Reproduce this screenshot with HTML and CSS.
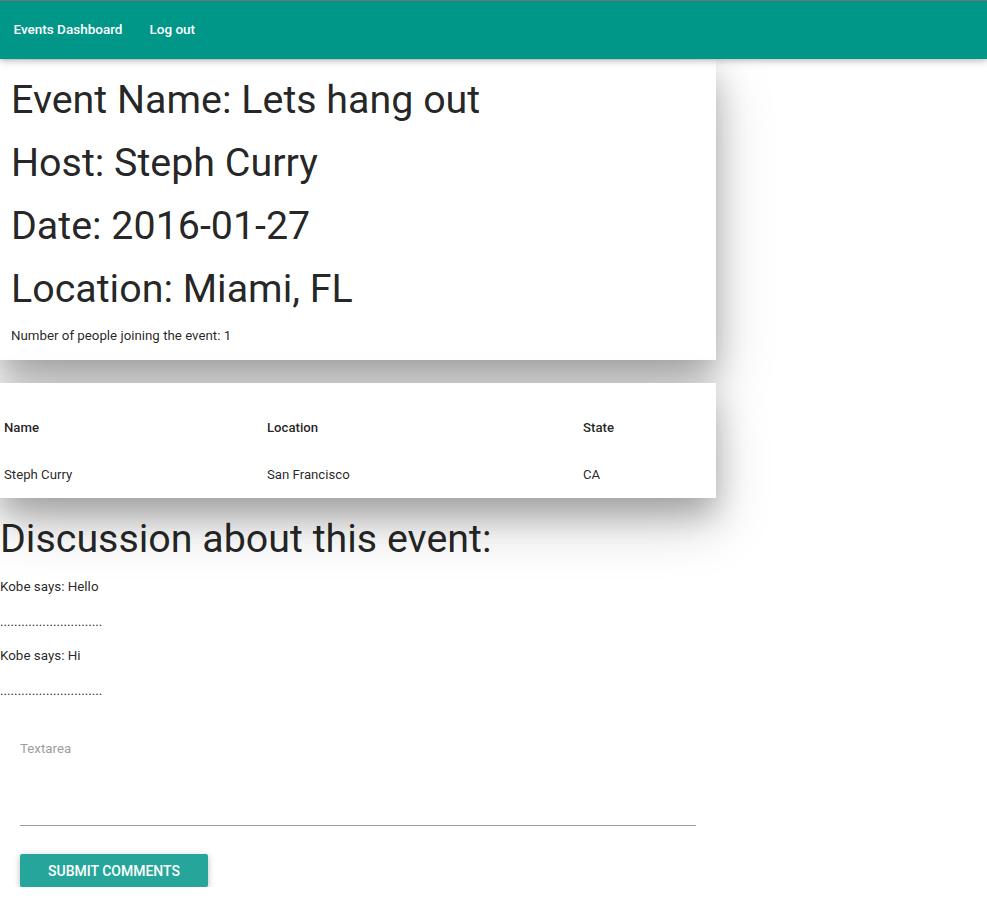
FILE: index.html
```html
<!DOCTYPE html>
<html lang="en">
<head>
<meta charset="utf-8">
<title>Event</title>
<link rel="stylesheet" href="styles.css">
</head>
<body>
<nav class="navbar">
  <a class="nav-link" href="#">Events Dashboard</a>
  <a class="nav-link" href="#">Log out</a>
</nav>
<main class="page">
  <section class="card event-card">
    <h4 class="event-line">Event Name: Lets hang out</h4>
    <h4 class="event-line">Host: Steph Curry</h4>
    <h4 class="event-line">Date: 2016-01-27</h4>
    <h4 class="event-line">Location: Miami, FL</h4>
    <p class="joining">Number of people joining the event: 1</p>
  </section>
  <section class="card table-card">
    <table class="people">
      <colgroup>
        <col class="col-name">
        <col class="col-loc">
        <col class="col-state">
      </colgroup>
      <thead>
        <tr><th>Name</th><th>Location</th><th>State</th></tr>
      </thead>
      <tbody>
        <tr><td>Steph Curry</td><td>San Francisco</td><td>CA</td></tr>
      </tbody>
    </table>
  </section>
  <h3 class="discussion-title">Discussion about this event:</h3>
  <div class="comments">
    <p class="comment">Kobe says: Hello</p>
    <p class="comment">.............................</p>
    <p class="comment">Kobe says: Hi</p>
    <p class="comment">.............................</p>
  </div>
  <form class="comment-form">
    <div class="field">
      <label class="field-label" for="ta">Textarea</label>
      <textarea id="ta" class="field-input"></textarea>
    </div>
    <button type="button" class="btn">Submit Comments</button>
  </form>
</main>
</body>
</html>
```
FILE: styles.css
```css
* { box-sizing: border-box; }
html, body { margin: 0; padding: 0; background: #fff; }
body {
  font-family: Roboto, "Noto Sans", "Liberation Sans", sans-serif;
  color: rgba(0,0,0,0.87);
}
.navbar {
  height: 59px;
  border-top: 1px solid #707070;
  background: #009688;
  display: flex;
  align-items: center;
  padding-bottom: 3px;
  box-shadow: 0 2px 5px 0 rgba(0,0,0,0.16), 0 2px 10px 0 rgba(0,0,0,0.12);
  position: relative;
  z-index: 2;
}
.nav-link {
  color: #fff;
  text-decoration: none;
  font-size: 13.5px;
  font-weight: 500;
  padding: 0 13.5px;
}
.page { display: flex; flex-direction: column; align-items: flex-start; }
.card {
  width: 716px;
  background: #fff;
  box-shadow: 0 16px 28px 0 rgba(0,0,0,0.22), 0 25px 55px 0 rgba(0,0,0,0.21);
  position: relative;
}
.event-card {
  margin-top: 1px;
  padding: 18px 11px 14px;
  display: flex;
  flex-direction: column;
  gap: 19px;
}
.event-line {
  margin: 0;
  font-size: 39.4px;
  line-height: 44px;
  font-weight: 400;
}
.joining {
  margin: -4px 0 0;
  font-size: 13.3px;
  line-height: 20px;
}
.table-card {
  margin-top: 23px;
  padding-top: 21px;
}
.people {
  width: 100%;
  border-collapse: collapse;
  table-layout: fixed;
  font-size: 13.2px;
  line-height: 17px;
}
.col-name { width: 263px; }
.col-loc { width: 316px; }
.people th, .people td {
  text-align: left;
  padding: 15px 4px;
}
.people th { font-weight: 500; }
.discussion-title {
  margin: 18px 0 0;
  font-size: 39.4px;
  line-height: 46px;
  font-weight: 400;
}
.comments { margin-top: 15px; }
.comment {
  margin: 0 0 14.5px;
  font-size: 13.4px;
  line-height: 20px;
}
.comment-form {
  padding-left: 20px;
  margin-top: 24px;
}
.field {
  position: relative;
  width: 676px;
}
.field-label {
  position: absolute;
  left: 0;
  top: 0;
  font-size: 13.3px;
  line-height: 20px;
  color: #9e9e9e;
}
.field-input {
  display: block;
  width: 100%;
  height: 87px;
  border: none;
  border-bottom: 1px solid #9e9e9e;
  resize: none;
  outline: none;
  background: transparent;
  font: inherit;
  padding: 0;
}
.btn {
  margin-top: 28px;
  height: 33px;
  padding: 0 28px;
  border: none;
  border-radius: 2px;
  background: #26a69a;
  color: #fff;
  font-family: Roboto, "Noto Sans", sans-serif;
  font-size: 14px;
  font-weight: 500;
  text-transform: uppercase;
  box-shadow: 0 2px 5px 0 rgba(0,0,0,0.16), 0 2px 10px 0 rgba(0,0,0,0.12);
}
```
